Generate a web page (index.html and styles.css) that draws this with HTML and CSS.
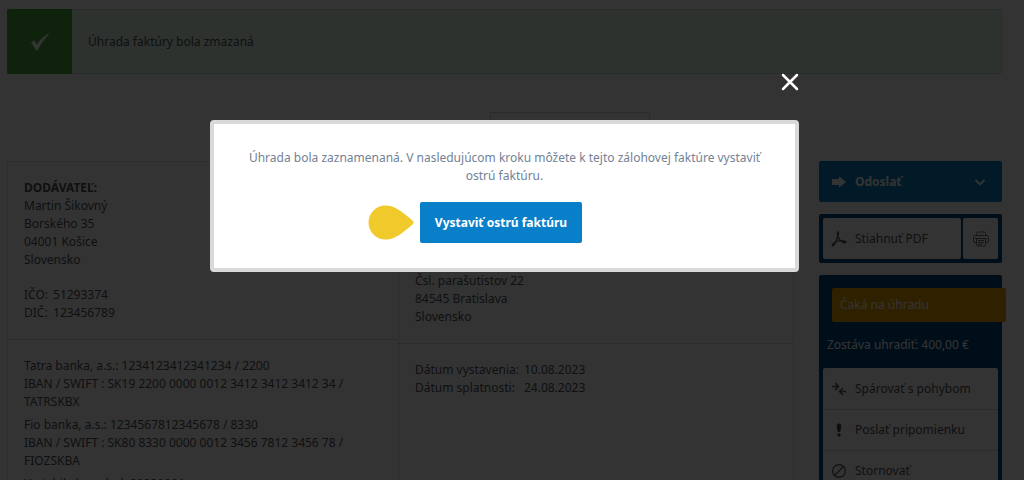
FILE: index.html
```
<!DOCTYPE html>
<html lang="sk">
<head>
<meta charset="utf-8">
<meta name="viewport" content="width=device-width, initial-scale=1">
<title>Faktúra</title>
<link rel="stylesheet" href="styles.css">
</head>
<body>
<div class="page">
  <div class="alert" role="status">
    <span class="alert-mark">
      <svg width="20" height="20" viewBox="0 0 20 20"><path d="M1 10.5 4.2 8.6 7.2 12.4C10 7.5 13.5 4 18.4 1.4L18.8 2.8C13.5 8 10.500 12.500 7.500 18.500L6.400 18.600Z" fill="#fff"/></svg>
    </span>
    <p class="alert-text">Úhrada faktúry bola zmazaná</p>
  </div>

  <div class="columns">
    <main class="main">
      <div class="tab"></div>
      <div class="invoice">
        <div class="col">
          <section class="cell supplier">
            <strong>DODÁVATEĽ:</strong>
            <p>Martin Šikovný<br>Borského 35<br>04001 Košice<br>Slovensko</p>
            <dl class="pairs ids">
              <dt>IČO:</dt><dd>51293374</dd>
              <dt>DIČ:</dt><dd>123456789</dd>
            </dl>
          </section>
          <section class="cell banks">
            <p>Tatra banka, a.s.: 1234123412341234 / 2200<br>IBAN / SWIFT : SK19 2200 0000 0012 3412 3412 3412 34 /<br>TATRSKBX</p>
            <p>Fio banka, a.s.: 1234567812345678 / 8330<br>IBAN / SWIFT : SK80 8330 0000 0012 3456 7812 3456 78 /<br>FIOZSKBA</p>
            <p>Variabilný symbol: 20230001</p>
          </section>
        </div>
        <div class="col">
          <section class="cell customer">
            <p>Čsl. parašutistov 22<br>84545 Bratislava<br>Slovensko</p>
          </section>
          <section class="cell dates">
            <dl class="pairs">
              <dt>Dátum vystavenia:</dt><dd>10.08.2023</dd>
              <dt>Dátum splatnosti:</dt><dd>24.08.2023</dd>
            </dl>
          </section>
        </div>
      </div>
    </main>

    <aside class="side">
      <button class="send" type="button">
        <svg width="16" height="16" viewBox="0 0 16 16"><path d="M1 5h7V2.200L15 8 8 13.800V11H1Z" fill="#fff"/></svg>
        <span class="grow">Odoslať</span>
        <svg width="12" height="12" viewBox="0 0 12 12"><path d="M1.500 4L6 8.500 10.500 4" fill="none" stroke="#fff" stroke-width="1.800"/></svg>
      </button>
      <div class="downloads">
        <button class="white pdf" type="button">
          <svg width="16" height="16" viewBox="0 0 16 16" fill="none" stroke="#55585f" stroke-width="1.400"><path d="M7 1C5.600 1 6.800 5.500 8 7.600 9.500 10.600 13 12 14.500 11.600 16 11 14 9.400 10.500 9.600 6.500 9.800 2.600 11.800 1.400 13.600.600 15.200 2.200 15.400 3.600 13.200 5.400 10.400 8.600 1 7 1Z"/></svg>
          <span>Stiahnuť PDF</span>
        </button>
        <button class="white print" type="button" aria-label="Tlačiť">
          <svg width="16" height="16" viewBox="0 0 16 16" fill="none" stroke="#6e7075" stroke-width="1"><path d="M3.500 4.500V2.500q0-1.500 1.500-1.500h6q1.500 0 1.500 1.500v2M3.500 11.500H2q-1.500 0-1.500-1.500V6q0-1.500 1.500-1.500h12q1.500 0 1.500 1.500v4q0 1.500-1.500 1.500h-1.500M2 7.500h12M3.500 7.500v6q0 1.500 1.500 1.500h6q1.500 0 1.500-1.500v-6M5 9.500h6M5 11.500h6M5 13.200h4"/></svg>
        </button>
      </div>
      <div class="status">
        <p class="badge">Čaká na úhradu</p>
        <p class="remaining">Zostáva uhradiť: 400,00 €</p>
        <div class="actions">
          <button class="action" type="button">
            <svg width="16" height="16" viewBox="0 0 16 16" fill="none" stroke="#55585f" stroke-width="1.500"><path d="M1 5.500h6M4 2l3.500 3.500L4 9M15 10.500H9M12 7l-3.500 3.500L12 14"/></svg>
            <span>Spárovať s pohybom</span>
          </button>
          <button class="action" type="button">
            <svg width="16" height="16" viewBox="0 0 16 16" fill="#444850"><path d="M8 1.500c2 0 2.400 1.500 2.200 3.500L9.200 10H6.800L5.800 5C5.600 3 6 1.500 8 1.500Z"/><circle cx="8" cy="13" r="1.700"/></svg>
            <span>Poslať pripomienku</span>
          </button>
          <button class="action" type="button">
            <svg width="16" height="16" viewBox="0 0 16 16" fill="none" stroke="#55585f" stroke-width="1.200"><circle cx="8" cy="8" r="6.400"/><path d="M3.500 12.500l9-9"/></svg>
            <span>Stornovať</span>
          </button>
        </div>
      </div>
    </aside>
  </div>
</div>

<div class="overlay">
  <div class="dialog" role="dialog" aria-modal="true" aria-labelledby="message">
    <button class="close" type="button" aria-label="Zavrieť">
      <svg width="18" height="18" viewBox="0 0 18 18"><path d="M2 2l14 14M16 2L2 16" stroke="#fff" stroke-width="2.500" stroke-linecap="round"/></svg>
    </button>
    <p class="message" id="message">Úhrada bola zaznamenaná. V nasledujúcom kroku môžete k tejto zálohovej faktúre vystaviť ostrú faktúru.</p>
    <div class="confirm">
      <svg class="pointer" width="46" height="35" viewBox="0 0 46 35"><path d="M17.500.500C28 .500 36 8.500 44.500 15.500Q46.500 17.500 44.500 19.500C36 26.500 28 34.500 17.500 34.500A17 17 0 0 1 17.500.500Z" fill="#f0c92b"/></svg>
      <button class="primary" type="button">Vystaviť ostrú faktúru</button>
    </div>
  </div>
</div>
</body>
</html>
```
FILE: styles.css
```
* { box-sizing: border-box; }

body {
  margin: 0;
  height: 100vh;
  overflow: hidden;
  background: #fff;
  color: #4f5258;
  font-family: "Noto Sans", "Open Sans", sans-serif;
  font-size: 12px;
  line-height: 18px;
}

p, dl, dd { margin: 0; }
svg { display: block; flex: none; }
button {
  border: 0;
  padding: 0;
  font: inherit;
  color: inherit;
  text-align: left;
}

.page { padding: 9px 22px 0 7px; }

.alert {
  display: flex;
  height: 65px;
  border: 1px dotted #a5c8a0;
  border-radius: 2px;
  background: #e1fae6;
}
.alert-mark {
  display: grid;
  place-items: center;
  width: 65px;
  margin: -1px 0 -1px -1px;
  border-radius: 2px 0 0 2px;
  background: #4baf3c;
}
.alert-text { align-self: center; padding-left: 16px; }

.columns {
  display: grid;
  grid-template-columns: minmax(0, 1fr) 183px;
  gap: 25px;
}
.main { padding-top: 38px; }
.tab {
  width: 160px;
  height: 49px;
  margin-left: auto;
  margin-right: 144px;
  border: 1px solid #d8d8d8;
  border-bottom: 0;
}

.invoice {
  display: grid;
  grid-template-columns: 390fr 395fr;
  border: 1px solid #e6e6e6;
  min-height: 400px;
}
.col + .col { border-left: 1px dotted #c8c8c8; }
.cell { padding: 17px 16px; }
.cell + .cell { border-top: 1px dotted #c8c8c8; }
.supplier strong { display: block; }
.banks p + p { margin-top: 5px; }
.customer {
  display: flex;
  align-items: flex-end;
  min-height: 181px;
}
.pairs {
  display: grid;
  grid-template-columns: max-content 1fr;
  column-gap: 5px;
}
.ids { margin-top: 17px; }

.side { display: grid; gap: 12px; align-content: start; padding-top: 87px; }
.send {
  display: flex;
  align-items: center;
  gap: 8px;
  height: 41px;
  padding: 0 16px 0 12px;
  border-radius: 2px;
  background: #0a7fc9;
  color: #fff;
  font-weight: 700;
}
.grow { flex: 1; }
.downloads {
  display: grid;
  grid-template-columns: 1fr 35px;
  gap: 2px;
  height: 49px;
  padding: 4px;
  border-radius: 2px;
  background: #004680;
}
.white { display: flex; align-items: center; border-radius: 2px; background: #fff; }
.pdf { gap: 8px; padding-left: 8px; }
.print { justify-content: center; }

.status {
  padding: 13px 4px 4px;
  border-radius: 2px;
  background: #004680;
  color: #fff;
}
.badge {
  margin: 0 -8px 0 9px;
  padding: 8px;
  border-radius: 2px;
  background: #eba300;
}
.remaining { padding: 14px 4px; }
.actions {
  display: grid;
  border-radius: 2px;
  background: #fff;
  color: #4f5258;
}
.action {
  display: flex;
  align-items: center;
  gap: 8px;
  height: 41px;
  padding-left: 8px;
  background: none;
}
.action + .action { border-top: 1px solid #d5d5d5; }

.overlay {
  position: fixed;
  inset: 0;
  padding: 120px 15px 0 0;
  background: rgba(0, 0, 0, 0.8);
}
.dialog {
  position: relative;
  width: 589px;
  max-width: 100%;
  margin: 0 auto;
  padding: 25px 24px;
  border: 4px solid #d9d9d9;
  border-radius: 4px;
  background: #fff;
}
.close {
  position: absolute;
  right: 0;
  bottom: 100%;
  margin: 0 -4px 33px 0;
  background: none;
}
.message { color: #738296; text-align: center; }
.confirm {
  display: grid;
  grid-template-columns: 1fr auto 1fr;
  align-items: center;
  gap: 6px;
  margin-top: 17px;
  padding-right: 7px;
}
.pointer { justify-self: end; }
.primary {
  height: 41px;
  padding: 0 15px;
  border-radius: 2px;
  background: #0a7fc9;
  color: #fff;
  font-weight: 700;
}
```
